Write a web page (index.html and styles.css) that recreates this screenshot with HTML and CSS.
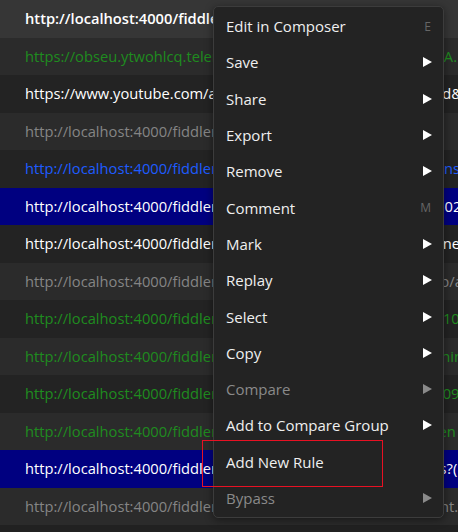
FILE: index.html
```html
<!DOCTYPE html>
<html>
<head>
<meta charset="utf-8">
<link rel="stylesheet" href="styles.css">
</head>
<body>
<div class="list">
  <div class="row hover white bold">http://localhost:4000/fiddler/sessions/list?page=1</div>
  <div class="row odd green">https://obseu.ytwohlcq.telemetry.microsoft.com/Collect/1.0/?A.1</div>
  <div class="row white">https://www.youtube.com/api/stats/watchtime?rel=embedded&amp;cpn=x</div>
  <div class="row odd gray">http://localhost:4000/fiddler/static/css/app.css</div>
  <div class="row blue">http://localhost:4000/fiddler/api/sessions/list?with=transactions</div>
  <div class="row odd sel">http://localhost:4000/fiddler/api/sessions/detail?id=1720031502</div>
  <div class="row white">http://localhost:4000/fiddler/api/rules/lists?type=all&amp;scope=one</div>
  <div class="row odd gray">http://localhost:4000/fiddler/static/js/vendor/modules/lib/web/app.js</div>
  <div class="row green">http://localhost:4000/fiddler/api/sessions/stats?from=17123410</div>
  <div class="row odd green">http://localhost:4000/fiddler/api/settings/general?name=machine</div>
  <div class="row green">http://localhost:4000/fiddler/api/sessions/count?since=1720009</div>
  <div class="row odd green">http://localhost:4000/fiddler/api/preferences/locale?ui_lang=en</div>
  <div class="row sel">http://localhost:4000/fiddler/api/sessions/export/transactions?(</div>
  <div class="row odd gray">http://localhost:4000/fiddler/static/fonts/icons/icofont-element.woff2</div>
</div>

<div class="menu">
  <div class="item"><span>Edit in Composer</span><span class="key">E</span></div>
  <div class="item"><span>Save</span><span class="arrow"></span></div>
  <div class="item"><span>Share</span><span class="arrow"></span></div>
  <div class="item"><span>Export</span><span class="arrow"></span></div>
  <div class="item"><span>Remove</span><span class="arrow"></span></div>
  <div class="item"><span>Comment</span><span class="key">M</span></div>
  <div class="item"><span>Mark</span><span class="arrow"></span></div>
  <div class="item"><span>Replay</span><span class="arrow"></span></div>
  <div class="item"><span>Select</span><span class="arrow"></span></div>
  <div class="item"><span>Copy</span><span class="arrow"></span></div>
  <div class="item disabled"><span>Compare</span><span class="arrow"></span></div>
  <div class="item"><span>Add to Compare Group</span><span class="arrow"></span></div>
  <div class="item"><span>Add New Rule</span></div>
  <div class="item disabled"><span>Bypass</span><span class="arrow"></span></div>
</div>

<div class="highlight"></div>
</body>
</html>
```

FILE: styles.css
```css
html, body {
  margin: 0;
  padding: 0;
  background: #212121;
  width: 458px;
  height: 532px;
  overflow: hidden;
  font-family: "Open Sans", "Noto Sans", sans-serif;
}

.list {
  display: flex;
  flex-direction: column;
}

.row {
  height: 37.5px;
  line-height: 37.5px;
  padding-left: 25px;
  font-size: 14.7px;
  white-space: nowrap;
  overflow: hidden;
  background: #232323;
  flex: none;
}

.row.odd { background: #2b2b2b; }
.row.hover { background: #363636; }
.row.sel { background: #000080; color: #ffffff; }

.white { color: #ffffff; }
.bold { font-weight: 600; }
.green { color: #1f8c1f; }
.gray { color: #858585; }
.blue { color: #1e5cff; }

.menu {
  position: absolute;
  left: 213px;
  top: 6px;
  width: 229px;
  padding: 1px 0;
  background: #232323;
  border: 1px solid #3c3c3c;
  border-radius: 5px;
  box-shadow: 0 2px 8px rgba(0, 0, 0, 0.45);
  display: flex;
  flex-direction: column;
}

.item {
  height: 36.3px;
  display: flex;
  align-items: center;
  justify-content: space-between;
  padding: 0 11px 0 12px;
  color: #efefef;
  font-size: 15px;
}

.item.disabled { color: #8a8a8a; }

.key {
  font-size: 12px;
  color: #666666;
  padding-right: 1px;
}

.arrow {
  width: 0;
  height: 0;
  border-top: 5px solid transparent;
  border-bottom: 5px solid transparent;
  border-left: 9px solid #ffffff;
}

.item.disabled .arrow { border-left-color: #8a8a8a; }

.highlight {
  position: absolute;
  left: 202px;
  top: 440px;
  width: 179px;
  height: 45px;
  border: 1px solid #e81123;
}
```
